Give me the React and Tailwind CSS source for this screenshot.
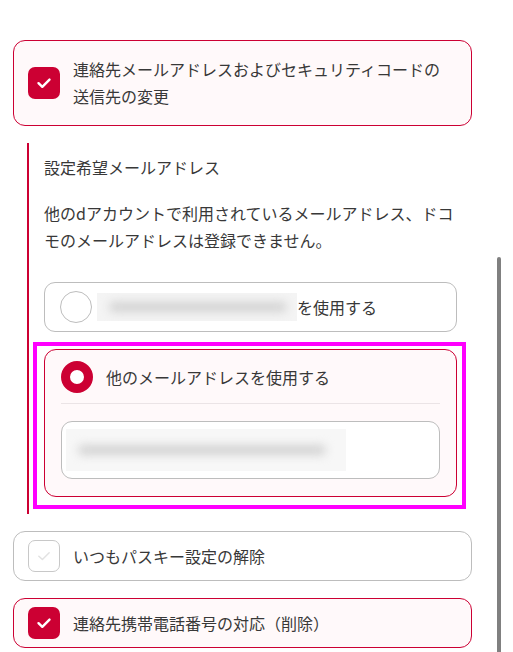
import React from "react";

function Check({ color = "#fff", width = 2.4 }) {
  return (
    <svg width="32" height="32" viewBox="0 0 32 32" fill="none">
      <path d="M10.5 16.2 L14.3 19.8 L21.5 12.6" stroke={color} strokeWidth={width} strokeLinecap="round" strokeLinejoin="round" />
    </svg>
  );
}

function Blur({ w, h, blobW, bg = "#f4f4f4" }) {
  return (
    <div className="relative overflow-hidden flex items-center" style={{ width: w, height: h, background: bg }}>
      <div className="absolute left-[12px] top-1/2 -translate-y-1/2 h-[10px] rounded-full bg-[#d2d2d2] blur-[5px]" style={{ right: w - blobW }} />
    </div>
  );
}

export default function App() {
  return (
    <div
      className="relative w-[513px] h-[652px] overflow-hidden bg-white text-[16px] leading-[27px] text-[#383838]"
      style={{ fontFamily: '"Noto Sans CJK JP", "Noto Sans", sans-serif' }}
    >
      <div className="ml-[13px] w-[459px] pt-[40px] flex flex-col">
        {/* Card 1 */}
        <div className="flex items-center gap-[13px] rounded-[12px] border border-[#cc0033] bg-[#fff9fa] pl-[14px] pr-[10px] py-[15px]">
          <div className="w-[32px] h-[32px] shrink-0 rounded-[7px] bg-[#cc0033] flex items-center justify-center">
            <Check />
          </div>
          <div>
            連絡先メールアドレスおよびセキュリティコードの
            <br />
            送信先の変更
          </div>
        </div>

        {/* Section */}
        <div className="mt-[17px] ml-[14px] border-l-2 border-[#cc0033] pl-[15px] pr-[15px] pt-[11px] pb-[17px]">
          <div>設定希望メールアドレス</div>
          <div className="mt-[19px] whitespace-nowrap">
            他のdアカウントで利用されているメールアドレス、ドコ
            <br />
            モのメールアドレスは登録できません。
          </div>

          {/* Option 1 */}
          <div className="mt-[28px] h-[50px] flex items-center rounded-[11px] border border-[#bdbdbd] bg-white pl-[15px]">
            <div className="w-[32px] h-[32px] shrink-0 rounded-full border border-[#bdbdbd] bg-white" />
            <div className="ml-[5px]">
              <Blur w={200} h={28} blobW={190} />
            </div>
            <span>を使用する</span>
          </div>

          {/* Option 2 */}
          <div className="relative mt-[17px]">
            <div className="rounded-[12px] border border-[#cc0033] bg-[#fff9fa] px-[16px] pt-[11px] pb-[17px]">
              <div className="flex items-center gap-[13px]">
                <div className="w-[32px] h-[32px] shrink-0 rounded-full border-[9px] border-[#cc0033] bg-white" />
                <span>他のメールアドレスを使用する</span>
              </div>
              <div className="mt-[10px] h-px bg-[#ebe4e6]" />
              <div className="mt-[17px] h-[58px] rounded-[11px] border border-[#bdbdbd] bg-white flex items-center pl-[4px]">
                <Blur w={280} h={42} blobW={260} bg="#f7f7f7" />
              </div>
            </div>
            <div className="pointer-events-none absolute -left-[11px] -right-[9px] -top-[7px] -bottom-[12px] border-[4px] border-[#ff00ff]" />
          </div>
        </div>

        {/* Card 3 */}
        <div className="mt-[17px] h-[50px] flex items-center gap-[13px] rounded-[12px] border border-[#bdbdbd] bg-white pl-[14px]">
          <div className="w-[32px] h-[32px] shrink-0 rounded-[7px] border border-[#c8c8c8] bg-white flex items-center justify-center">
            <Check color="#e2e2e2" width={1.6} />
          </div>
          <span>いつもパスキー設定の解除</span>
        </div>

        {/* Card 4 */}
        <div className="mt-[17px] h-[50px] flex items-center gap-[13px] rounded-[12px] border border-[#cc0033] bg-[#fff9fa] pl-[14px]">
          <div className="w-[32px] h-[32px] shrink-0 rounded-[7px] bg-[#cc0033] flex items-center justify-center">
            <Check />
          </div>
          <span>連絡先携帯電話番号の対応（削除）</span>
        </div>
      </div>

      {/* Scrollbar */}
      <div className="absolute left-[497px] top-[257px] w-[4px] h-[420px] rounded-full bg-[#808080]" />
    </div>
  );
}
